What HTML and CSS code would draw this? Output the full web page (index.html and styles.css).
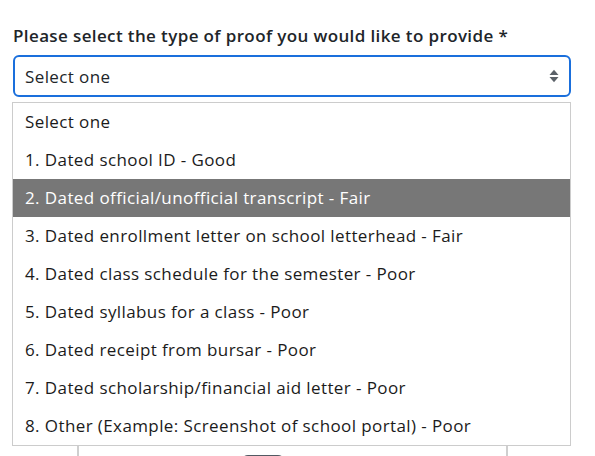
FILE: index.html
```html
<!DOCTYPE html>
<html>
<head>
<meta charset="utf-8">
<link rel="stylesheet" href="styles.css">
</head>
<body>
<div class="page">
  <label class="label">Please select the type of proof you would like to provide *</label>
  <div class="select">
    <span class="select-text">Select one</span>
    <svg class="arrows" width="10" height="14" viewBox="0 0 10 14">
      <path d="M0.5 6 L5 0.8 L9.5 6 Z" fill="#5b6168"/>
      <path d="M0.5 8 L5 13.2 L9.5 8 Z" fill="#5b6168"/>
    </svg>
  </div>
  <div class="behind">
    <div class="panel">
      <div class="tabs"><span class="tab-dark"></span><span class="tab-light"></span></div>
    </div>
  </div>
  <ul class="dropdown">
    <li>Select one</li>
    <li>1. Dated school ID - Good</li>
    <li class="active">2. Dated official/unofficial transcript - Fair</li>
    <li>3. Dated enrollment letter on school letterhead - Fair</li>
    <li>4. Dated class schedule for the semester - Poor</li>
    <li>5. Dated syllabus for a class - Poor</li>
    <li>6. Dated receipt from bursar - Poor</li>
    <li>7. Dated scholarship/financial aid letter - Poor</li>
    <li>8. Other (Example: Screenshot of school portal) - Poor</li>
  </ul>
</div>
</body>
</html>
```
FILE: styles.css
```css
html, body {
  margin: 0;
  padding: 0;
  background: #ffffff;
}
body {
  width: 595px;
  height: 456px;
  overflow: hidden;
  font-family: "Open Sans", "Noto Sans", sans-serif;
  color: #212529;
}
.page {
  position: relative;
  padding: 24px 24px 0 13px;
}
.label {
  display: block;
  font-size: 17px;
  font-weight: 600;
  line-height: 24px;
  margin-bottom: 7px;
  color: #212529;
  letter-spacing: 0.38px;
}
.select {
  box-sizing: border-box;
  width: 558px;
  height: 42px;
  border: 2px solid #1a6fdc;
  border-radius: 6px;
  display: flex;
  align-items: center;
  justify-content: space-between;
  padding: 0 10px 0 10px;
}
.select-text {
  font-size: 17px;
  color: #212529;
  letter-spacing: 0.4px;
}
.arrows {
  display: block;
}
.behind {
  margin-top: 6px;
  padding-left: 64px;
}
.panel {
  box-sizing: border-box;
  width: 431px;
  height: 360px;
  border-left: 2px solid #cfcfcf;
  border-right: 2px solid #cfcfcf;
  display: flex;
  flex-direction: column;
  justify-content: flex-end;
}
.tabs {
  display: flex;
  align-items: flex-end;
  padding-left: 162px;
  height: 10px;
}
.tab-dark {
  width: 44px;
  height: 8px;
  background: #525a63;
  border-radius: 7px 7px 0 0;
}
.tab-light {
  width: 58px;
  height: 3px;
  background: #e4e6e8;
}
.dropdown {
  position: absolute;
  top: 102px;
  left: 12px;
  width: 557px;
  margin: 0;
  padding: 0;
  list-style: none;
  background: #ffffff;
  border: 1px solid #cccccc;
}
.dropdown li {
  height: 38px;
  line-height: 38px;
  padding-left: 12px;
  font-size: 17px;
  letter-spacing: 0.4px;
  color: #1b1b1b;
  white-space: nowrap;
}
.dropdown li.active {
  background: #777777;
  color: #ffffff;
}
```
